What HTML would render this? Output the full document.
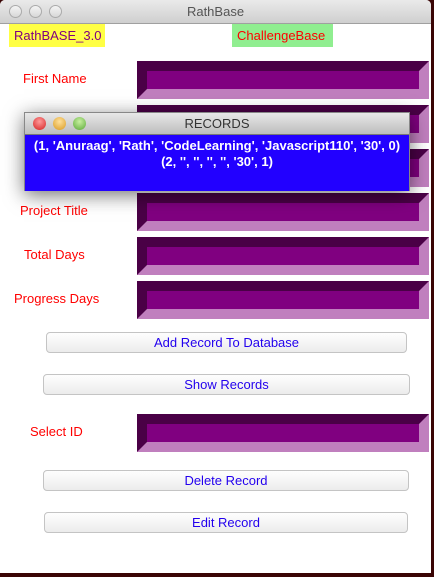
<!DOCTYPE html>
<html><head><style>
*{margin:0;padding:0;box-sizing:border-box}
body{width:434px;height:577px;background:#3a0505;position:relative;overflow:hidden;font-family:"Liberation Sans",sans-serif}
.win{position:absolute;left:0;top:0;width:431px;height:573px;background:#fff;border-radius:5px 5px 0 0;overflow:hidden}
.tb{height:24px;background:linear-gradient(#eaeaea,#cfcfcf);border-bottom:1px solid #a0a0a0;text-align:center;font-size:13px;line-height:24px;color:#555}
.dot{position:absolute;top:5px;width:13px;height:13px;border-radius:50%;border:1px solid #aaa;background:linear-gradient(#f4f4f4,#d8d8d8)}
.a{position:absolute}
.lbl{position:absolute;color:#f00;font-size:13px}
.f{position:absolute;left:137px;width:292px;height:38px;background:#c07fbe}
.f:before{content:"";position:absolute;left:0;top:0;width:292px;height:38px;background:#4a0046;clip-path:polygon(0 0,292px 0,282px 10px,10px 10px,10px 28px,0 38px)}
.f:after{content:"";position:absolute;left:10px;top:10px;width:272px;height:18px;background:#800080}
.btn{position:absolute;height:21px;border:1px solid #c4c4c4;border-radius:4px;background:linear-gradient(#fefefe,#ececec);color:#2200ee;font-size:13px;text-align:center;line-height:19px}
.pop{position:absolute;left:24px;top:112px;width:386px;height:79px;box-shadow:0 4px 18px rgba(0,0,0,.55);border:1px solid #888}
.ptb{height:22px;background:linear-gradient(#e8e8e8,#bdbdbd);text-align:center;font-size:13px;line-height:22px;color:#333;border-bottom:1px solid #777;position:relative}
.pd{position:absolute;top:4px;width:13px;height:13px;border-radius:50%}
.pb{background:#2200ff;height:56px;color:#fff;font-weight:bold;font-size:13px;text-align:center;line-height:16px;padding-top:3px}
</style></head><body>
<div class="win">
<div class="tb">RathBase</div>
<div class="dot" style="left:9px"></div><div class="dot" style="left:29px"></div><div class="dot" style="left:49px"></div>
<div class="a" style="left:9px;top:24px;width:96px;height:23px;background:#ffff44;color:#800080;font-size:13px;line-height:23px;padding-left:5px">RathBASE_3.0</div>
<div class="a" style="left:232px;top:24px;width:101px;height:23px;background:#90ee90;color:#f00;font-size:13px;line-height:23px;padding-left:5px">ChallengeBase</div>
<div class="lbl" style="left:23px;top:71px">First Name</div>
<div class="lbl" style="left:20px;top:203px">Project Title</div>
<div class="lbl" style="left:24px;top:247px">Total Days</div>
<div class="lbl" style="left:14px;top:291px">Progress Days</div>
<div class="lbl" style="left:30px;top:424px">Select ID</div>
<div class="f" style="top:61px"></div>
<div class="f" style="top:105px"></div>
<div class="f" style="top:149px"></div>
<div class="f" style="top:193px"></div>
<div class="f" style="top:237px"></div>
<div class="f" style="top:281px"></div>
<div class="f" style="top:414px"></div>
<div class="btn" style="left:46px;top:332px;width:361px">Add Record To Database</div>
<div class="btn" style="left:43px;top:374px;width:367px">Show Records</div>
<div class="btn" style="left:43px;top:470px;width:366px">Delete Record</div>
<div class="btn" style="left:44px;top:512px;width:364px">Edit Record</div>
<div class="pop">
<div class="ptb">RECORDS
<div class="pd" style="left:8px;background:radial-gradient(circle at 50% 35%,#ff9a9a,#d42020)"></div>
<div class="pd" style="left:28px;background:radial-gradient(circle at 50% 35%,#ffe09a,#d99a20)"></div>
<div class="pd" style="left:48px;background:radial-gradient(circle at 50% 35%,#c8f0a0,#5aa838)"></div>
</div>
<div class="pb">(1, 'Anuraag', 'Rath', 'CodeLearning', 'Javascript110', '30', 0)<br>(2, '', '', '', '', '30', 1)</div>
</div>
</div>
</body></html>
